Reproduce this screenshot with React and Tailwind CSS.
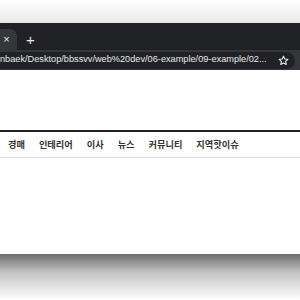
import React from 'react';

const menus = ['경매', '인테리어', '이사', '뉴스', '커뮤니티', '지역핫이슈'];

const StarIcon = () => (
  <svg width="11" height="11" viewBox="0 0 24 24" fill="none" stroke="#e8eaed" strokeWidth="2.4" strokeLinejoin="round">
    <path d="M12 2.5l2.9 6.1 6.6.8-4.9 4.6 1.3 6.6L12 17.3l-5.9 3.3 1.3-6.6-4.9-4.6 6.6-.8z" />
  </svg>
);

const App = () => {
  return (
    <div className="w-[300px] h-[300px] overflow-hidden bg-white font-['Liberation_Sans','Noto_Sans_CJK_KR',sans-serif]">
      {/* shadow above the window */}
      <div className="h-[23px] bg-gradient-to-b from-white to-[#e9e9e9]" />

      {/* tab strip */}
      <div className="h-[27px] bg-[#202124] flex items-end">
        <div className="w-[17px] h-[21px] bg-[#35363a] rounded-tr-[7px] flex items-center justify-center pr-[4px]">
          <span className="text-[#e8eaed] text-[11px] leading-none">×</span>
        </div>
        <div className="h-[21px] flex items-center pl-[9px]">
          <span className="text-[#e8eaed] text-[15px] leading-none font-light">+</span>
        </div>
      </div>

      {/* toolbar */}
      <div className="h-[20px] bg-[#35363a] flex items-center pr-[5px]">
        <div className="flex-1 h-[17px] bg-[#202124] rounded-r-full flex items-center pr-[6px]">
          <span className="flex-1 text-[#e8eaed] text-[9.2px] leading-none whitespace-nowrap">
            nbaek/Desktop/bbssvv/web%20dev/06-example/09-example/02...
          </span>
          <StarIcon />
        </div>
      </div>

      {/* page */}
      <div className="h-[184px] bg-white pt-[60px]">
        <div className="border-t-2 border-[#222] border-b border-b-[#dcdcdc] h-[28px] flex items-center pl-[8px] gap-[14px]">
          {menus.map((m) => (
            <span
              key={m}
              className="text-[9.2px] leading-none font-bold text-[#333] font-['Noto_Sans_CJK_KR',sans-serif]"
            >
              {m}
            </span>
          ))}
        </div>
      </div>

      {/* shadow below the window */}
      <div className="h-[46px] bg-gradient-to-b from-[#6e6e6e] via-[#c4c4c4] via-40% to-white" />
    </div>
  );
};

export default App;
